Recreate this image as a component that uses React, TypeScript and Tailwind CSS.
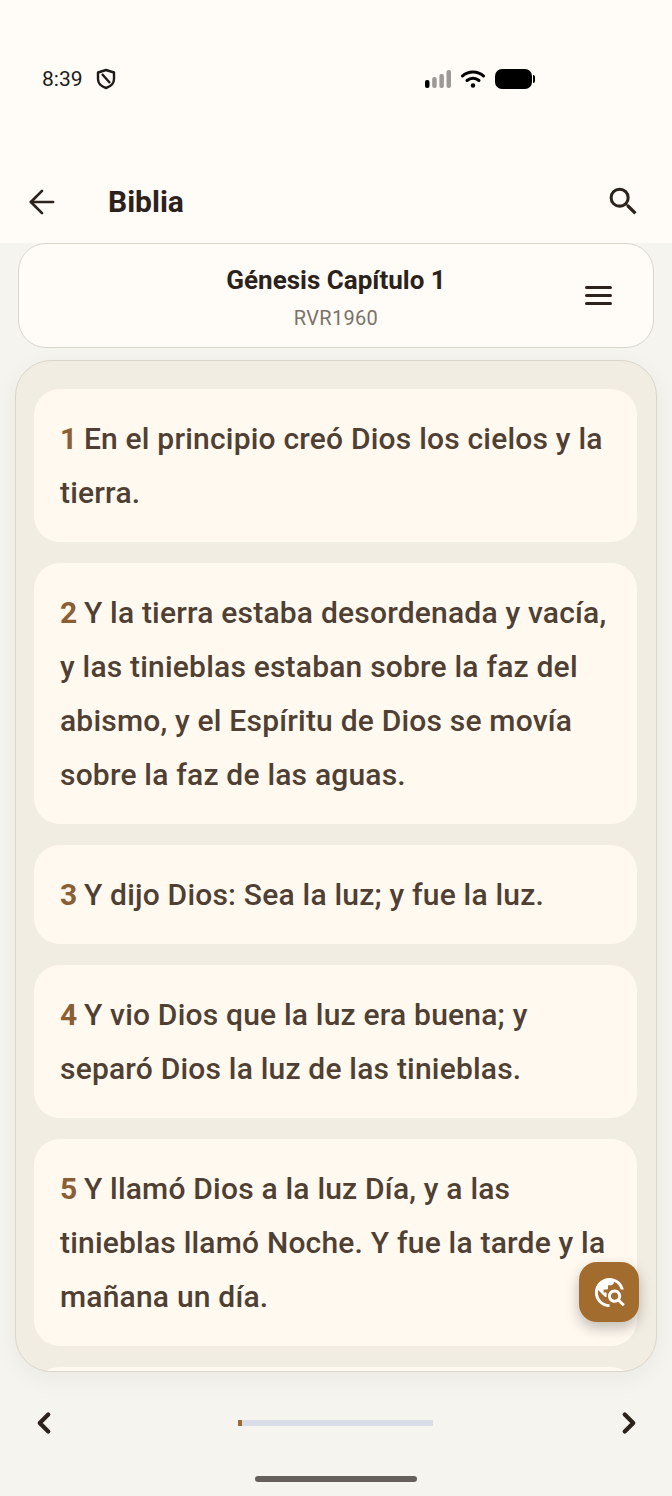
import { ArrowLeft, ChevronLeft, ChevronRight } from "lucide-react";
import { MdSearch, MdTravelExplore } from "react-icons/md";

const verses = [
  { n: 1, text: "En el principio creó Dios los cielos y la tierra." },
  { n: 2, text: "Y la tierra estaba desordenada y vacía, y las tinieblas estaban sobre la faz del abismo, y el Espíritu de Dios se movía sobre la faz de las aguas." },
  { n: 3, text: "Y dijo Dios: Sea la luz; y fue la luz." },
  { n: 4, text: "Y vio Dios que la luz era buena; y separó Dios la luz de las tinieblas." },
  { n: 5, text: "Y llamó Dios a la luz Día, y a las tinieblas llamó Noche. Y fue la tarde y la mañana un día." },
  { n: 6, text: "Luego dijo Dios: Haya expansión en medio de las aguas." },
];

const StatusBar = () => (
  <div className="flex h-[160px] items-start justify-between pl-[42px] pr-[137px] pt-[67px]">
    <div className="flex items-center gap-[13px]">
      <span className="text-[21px] leading-[24px] text-[#1c1b1a]">8:39</span>
      <svg width="20" height="22" viewBox="0 0 20 22" fill="none" stroke="#1c1b1a" strokeWidth="2.4">
        <path d="M10 2 L18 4.5 V11 C18 15.5 14.5 18.5 10 20 C5.5 18.5 2 15.5 2 11 V4.5 Z" strokeLinejoin="round" />
        <path d="M6 6 L14 15" />
      </svg>
    </div>
    <div className="flex items-center gap-[10px] pt-[2px]">
      <svg width="26" height="20" viewBox="0 0 26 20">
        <rect x="0" y="11" width="4.5" height="8" rx="2" fill="#000" />
        <rect x="7.2" y="8" width="4.5" height="11" rx="2" fill="#9c9a97" />
        <rect x="14.4" y="5" width="4.5" height="14" rx="2" fill="#9c9a97" />
        <rect x="21.5" y="1" width="4.5" height="18" rx="2" fill="#9c9a97" />
      </svg>
      <svg width="24" height="20" viewBox="0 0 24 20" fill="none" stroke="#000" strokeWidth="3" strokeLinecap="round">
        <path d="M1.5 7 C7 1.5 17 1.5 22.5 7" />
        <path d="M6 11.5 C9.5 8.5 14.5 8.5 18 11.5" />
        <circle cx="12" cy="16.5" r="2.2" fill="#000" stroke="none" />
      </svg>
      <div className="flex items-center gap-[1px]">
        <div className="h-[20px] w-[37px] rounded-[7px] bg-black" />
        <div className="h-[8px] w-[2px] rounded-r-sm bg-black" />
      </div>
    </div>
  </div>
);

const Verse = ({ n, text }: { n: number; text: string }) => (
  <div className="shrink-0 rounded-[26px] bg-[#fff9f0] px-[26px] py-[22.5px] text-[30px] font-medium leading-[54px] tracking-[0.2px] text-[#4f4033]">
    <span className="font-bold tracking-[-1px] text-[#8a5f35]">{n}</span> {text}
  </div>
);

export default function App() {
  return (
    <div
      className="relative flex h-[1496px] w-[672px] flex-col overflow-hidden bg-[#f6f4ee]"
      style={{ fontFamily: "Roboto, sans-serif" }}
    >
      <div className="h-[243px] shrink-0 bg-[#fffcf7]">
        <StatusBar />
        <div className="flex h-[83px] items-center justify-between pr-[30px]">
          <div className="flex items-center">
            <ArrowLeft size={38} strokeWidth={1.7} color="#2c221b" className="ml-[23px]" />
            <span className="ml-[47px] text-[30px] font-bold text-[#2c221b]">Biblia</span>
          </div>
          <MdSearch size={37} color="#2c221b" />
        </div>
      </div>

      <div className="relative mx-[18px] flex h-[105px] shrink-0 flex-col items-center rounded-[28px] border border-[#dad6cc] bg-[#fffcf7] pt-[20px]">
        <span className="text-[26px] font-bold leading-[32px] text-[#2c221b]">Génesis Capítulo 1</span>
        <span className="mt-[9px] text-[20px] leading-[26px] tracking-[0.3px] text-[#7b7268]">RVR1960</span>
        <div className="absolute right-[41px] top-[42px] flex w-[27px] flex-col gap-[5px]">
          <div className="h-[3px] rounded-full bg-[#2c221b]" />
          <div className="h-[3px] rounded-full bg-[#2c221b]" />
          <div className="h-[3px] rounded-full bg-[#2c221b]" />
        </div>
      </div>

      <div className="mx-[15px] mt-[12px] flex h-[1012px] shrink-0 flex-col gap-[21px] overflow-hidden rounded-[36px] border border-[#dcd6ca] bg-[#f2ede2] pl-[18px] pr-[19px] pt-[28px] shadow-[0_6px_24px_rgba(0,0,0,0.05)]">
        {verses.map((v) => (
          <Verse key={v.n} n={v.n} text={v.text} />
        ))}
      </div>

      <div className="flex items-center justify-between pl-[27px] pr-[26px] pt-[34px]">
        <ChevronLeft size={34} strokeWidth={3} color="#2c221b" />
        <div className="-ml-[2px] h-[6px] w-[195px] bg-[#d9dde8]">
          <div className="h-[6px] w-[4px] bg-[#9c6b30]" />
        </div>
        <ChevronRight size={34} strokeWidth={3} color="#2c221b" />
      </div>

      <div className="mx-auto mt-[36px] h-[6px] w-[162px] rounded-full bg-[#65605c]" />

      <button className="absolute left-[579px] top-[1262px] flex h-[60px] w-[60px] items-center justify-center rounded-[18px] bg-[#a26c2e] shadow-[0_6px_14px_rgba(0,0,0,0.25)]">
        <MdTravelExplore size={35} color="#fff" />
      </button>
    </div>
  );
}
